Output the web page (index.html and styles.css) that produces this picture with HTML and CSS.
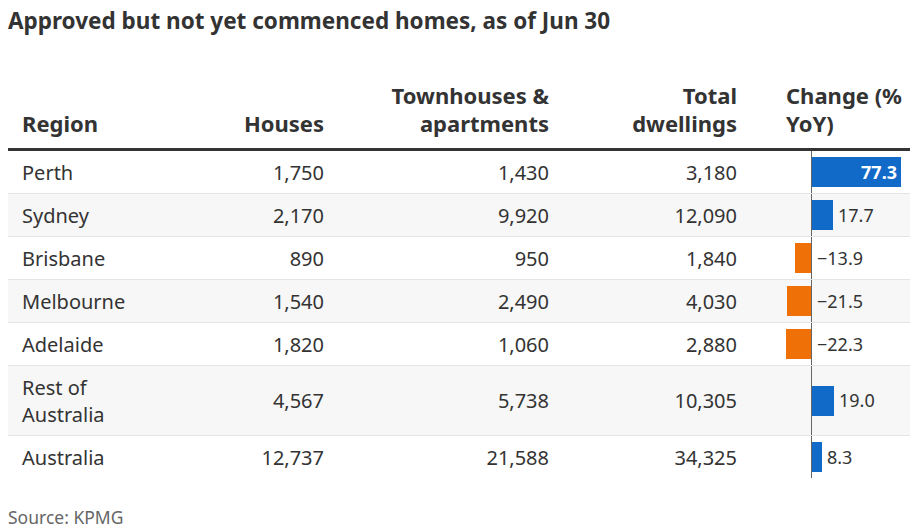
FILE: index.html
```html
<!DOCTYPE html>
<html lang="en">
<head>
<meta charset="utf-8">
<link rel="stylesheet" href="styles.css">
</head>
<body>
<div class="page">
  <h1 class="title">Approved but not yet commenced homes, as of Jun 30</h1>
  <div class="table">
    <div class="row head">
      <div class="cell">Region</div>
      <div class="cell num">Houses</div>
      <div class="cell num">Townhouses &amp;<br>apartments</div>
      <div class="cell num">Total<br>dwellings</div>
      <div class="cell chg">Change (%<br>YoY)</div>
    </div>
    <div class="row">
      <div class="cell">Perth</div>
      <div class="cell num">1,750</div>
      <div class="cell num">1,430</div>
      <div class="cell num">3,180</div>
      <div class="cell chart"><div class="neg"></div><div class="bar pos inside" style="width:89px">77.3</div></div>
    </div>
    <div class="row alt">
      <div class="cell">Sydney</div>
      <div class="cell num">2,170</div>
      <div class="cell num">9,920</div>
      <div class="cell num">12,090</div>
      <div class="cell chart"><div class="neg"></div><div class="bar pos" style="width:21px"></div><span class="lbl">17.7</span></div>
    </div>
    <div class="row">
      <div class="cell">Brisbane</div>
      <div class="cell num">890</div>
      <div class="cell num">950</div>
      <div class="cell num">1,840</div>
      <div class="cell chart"><div class="neg"><div class="bar negbar" style="width:16px"></div></div><span class="lbl">−13.9</span></div>
    </div>
    <div class="row alt">
      <div class="cell">Melbourne</div>
      <div class="cell num">1,540</div>
      <div class="cell num">2,490</div>
      <div class="cell num">4,030</div>
      <div class="cell chart"><div class="neg"><div class="bar negbar" style="width:24px"></div></div><span class="lbl">−21.5</span></div>
    </div>
    <div class="row">
      <div class="cell">Adelaide</div>
      <div class="cell num">1,820</div>
      <div class="cell num">1,060</div>
      <div class="cell num">2,880</div>
      <div class="cell chart"><div class="neg"><div class="bar negbar" style="width:25px"></div></div><span class="lbl">−22.3</span></div>
    </div>
    <div class="row alt">
      <div class="cell">Rest of<br>Australia</div>
      <div class="cell num">4,567</div>
      <div class="cell num">5,738</div>
      <div class="cell num">10,305</div>
      <div class="cell chart"><div class="neg"></div><div class="bar pos" style="width:22px"></div><span class="lbl">19.0</span></div>
    </div>
    <div class="row last">
      <div class="cell">Australia</div>
      <div class="cell num">12,737</div>
      <div class="cell num">21,588</div>
      <div class="cell num">34,325</div>
      <div class="cell chart"><div class="neg"></div><div class="bar pos" style="width:10px"></div><span class="lbl">8.3</span></div>
    </div>
  </div>
  <div class="source">Source: KPMG</div>
</div>
</body>
</html>
```

FILE: styles.css
```css
* { box-sizing: border-box; }
html, body { margin: 0; padding: 0; background: #fff; }
body {
  font-family: "Noto Sans", "DejaVu Sans", sans-serif;
  color: #333;
  width: 910px;
  height: 531px;
  overflow: hidden;
}
.page { padding: 6px 0 0 8px; }
.title {
  margin: 0;
  font-size: 22.5px;
  line-height: 30px;
  font-weight: 700;
  color: #333;
}
.table { margin-top: 45px; width: 902px; }
.row {
  display: grid;
  grid-template-columns: 192px 138px 225px 188px 159px;
  border-bottom: 1px solid #e4e4e4;
}
.row.alt { background: #f7f7f7; }
.row.last { border-bottom: none; }
.row.head {
  border-bottom: 3px solid #333;
  font-weight: 700;
  align-items: end;
}
.cell {
  padding: 7.5px 14px;
  font-size: 20px;
  line-height: 27px;
  display: flex;
  align-items: center;
}
.head .cell { display: block; padding: 0 14px 11px; font-size: 22px; line-height: 28px; }
.cell.num { justify-content: flex-end; text-align: right; }
.head .cell.chg { padding-left: 35px; padding-right: 0; }
.cell.chart {
  padding: 0 10px 0 35px;
  background: linear-gradient(#666, #666) 60px 0 / 1px 100% no-repeat;
}
.neg { width: 25px; flex: none; display: flex; justify-content: flex-end; }
.bar { height: 30px; flex: none; }
.pos { background: #1169c8; margin-left: 1px; }
.negbar { background: #f07008; }
.inside {
  color: #fff;
  font-weight: 700;
  text-align: right;
  padding-right: 4px;
  line-height: 30px;
  font-size: 18px;
}
.lbl { margin-left: 5px; font-size: 18px; }
.neg + .lbl { margin-left: 6px; }
.source {
  margin-top: 29px;
  font-size: 17.5px;
  line-height: 20px;
  color: #666;
}
```
